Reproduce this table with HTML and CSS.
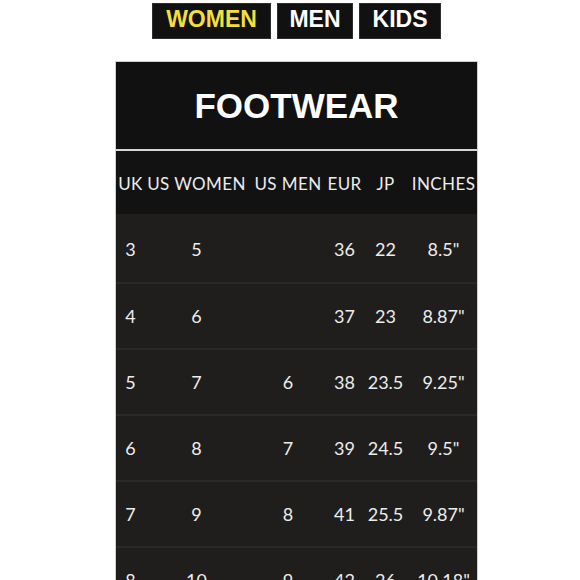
FILE: index.html
```html
<!DOCTYPE html>
<html lang="en">
<head>
<meta charset="utf-8">
<title>Size Chart</title>
<link rel="stylesheet" href="styles.css">
</head>
<body>
<div class="page">
  <nav class="tabs">
    <a class="tab tab-women">WOMEN</a>
    <a class="tab tab-men">MEN</a>
    <a class="tab tab-kids">KIDS</a>
  </nav>
  <div class="chart">
    <div class="chart-title">FOOTWEAR</div>
    <div class="grid grid-head">
      <div class="cell">UK</div>
      <div class="cell">US WOMEN</div>
      <div class="cell">US MEN</div>
      <div class="cell">EUR</div>
      <div class="cell">JP</div>
      <div class="cell">INCHES</div>
    </div>
    <div class="grid grid-row grid-first">
      <div class="cell">3</div><div class="cell">5</div><div class="cell"></div><div class="cell">36</div><div class="cell">22</div><div class="cell">8.5"</div>
    </div>
    <div class="grid grid-row">
      <div class="cell">4</div><div class="cell">6</div><div class="cell"></div><div class="cell">37</div><div class="cell">23</div><div class="cell">8.87"</div>
    </div>
    <div class="grid grid-row">
      <div class="cell">5</div><div class="cell">7</div><div class="cell">6</div><div class="cell">38</div><div class="cell">23.5</div><div class="cell">9.25"</div>
    </div>
    <div class="grid grid-row">
      <div class="cell">6</div><div class="cell">8</div><div class="cell">7</div><div class="cell">39</div><div class="cell">24.5</div><div class="cell">9.5"</div>
    </div>
    <div class="grid grid-row">
      <div class="cell">7</div><div class="cell">9</div><div class="cell">8</div><div class="cell">41</div><div class="cell">25.5</div><div class="cell">9.87"</div>
    </div>
    <div class="grid grid-row">
      <div class="cell">8</div><div class="cell">10</div><div class="cell">9</div><div class="cell">42</div><div class="cell">26</div><div class="cell">10.18"</div>
    </div>
  </div>
</div>
</body>
</html>
```

FILE: styles.css
```css
html, body {
  margin: 0;
  padding: 0;
  background: #ffffff;
  overflow: hidden;
}

.page {
  width: 363px;
  margin-left: 115px;
  padding-top: 3px;
}

.tabs {
  display: flex;
  gap: 6px;
  padding-left: 37px;
}

.tab {
  display: block;
  height: 36px;
  line-height: 30px;
  box-sizing: border-box;
  text-align: center;
  background: #111111;
  border: 1px solid #2e2e2e;
  color: #ffffff;
  font-family: "Liberation Sans", Arial, sans-serif;
  font-weight: bold;
  font-size: 23px;
}

.tab-women {
  width: 119px;
  color: #f3df3b;
}

.tab-men {
  width: 76px;
}

.tab-kids {
  width: 82px;
}

.chart {
  margin-top: 22px;
  border: 1px solid #cfcfcf;
  border-bottom: none;
  background: #121212;
}

.chart-title {
  height: 87px;
  display: flex;
  align-items: center;
  justify-content: center;
  background: #111111;
  color: #ffffff;
  font-family: "Liberation Sans", Arial, sans-serif;
  font-weight: bold;
  font-size: 35px;
  border-bottom: 2px solid #d6d6d6;
}

.grid {
  display: grid;
  grid-template-columns: 29px 103px 80px 33px 49px 67px;
}

.cell {
  display: flex;
  align-items: center;
  justify-content: center;
  white-space: nowrap;
  font-family: Lato, "Open Sans", sans-serif;
}

.grid-head {
  height: 63px;
  background: #121212;
  color: #ececec;
  font-size: 17px;
  letter-spacing: 0.4px;
  padding-top: 1px;
  box-sizing: border-box;
}

.grid-row {
  height: 64px;
  background: #1f1e1c;
  border-top: 2px solid #27292b;
  color: #ededed;
  font-size: 18px;
}

.grid-first {
  height: 68px;
  border-top: none;
  padding-top: 2px;
  box-sizing: border-box;
}
```
